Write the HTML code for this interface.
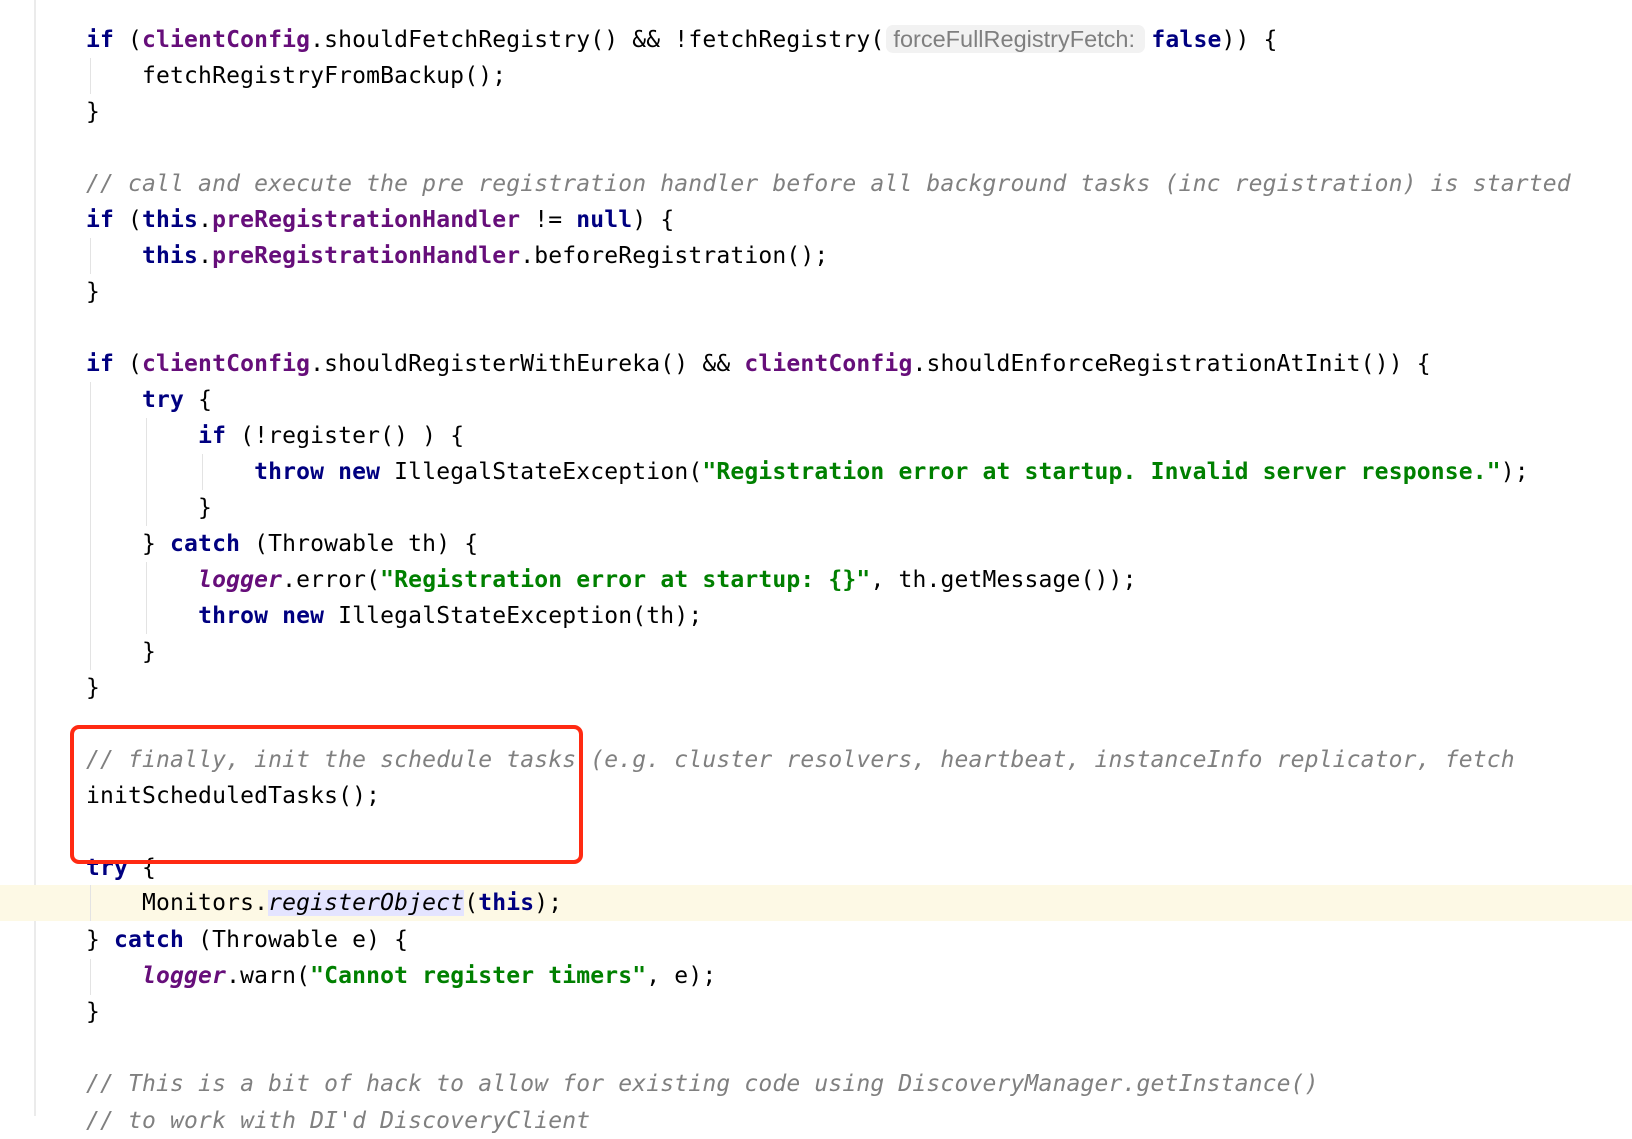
<!DOCTYPE html>
<html><head><meta charset="utf-8">
<style>
html,body{margin:0;padding:0;background:#fff;}
body{width:1632px;height:1116px;overflow:hidden;position:relative;font-family:"DejaVu Sans Mono","Liberation Mono",monospace;font-size:23px;letter-spacing:0.16px;color:#000;}
.gut{position:absolute;left:34px;top:0;width:2px;height:1116px;background:#ebebeb;}
.hl{position:absolute;left:0;top:885px;width:1632px;height:36px;background:#fdf9e5;}
.ln{position:absolute;left:86px;height:36px;line-height:36px;white-space:pre;}
.k{color:#000080;font-weight:bold;}
.f{color:#660e7a;font-weight:bold;}
.s{color:#008000;font-weight:bold;}
.c{color:#808080;font-style:italic;}
.l{color:#660e7a;font-weight:bold;font-style:italic;}
.it{font-style:italic;}
.sel{background:#e4e4ff;}
.hint{display:inline-block;font-family:"Liberation Sans","DejaVu Sans",sans-serif;font-size:23.5px;letter-spacing:0;color:#7f7f7f;background:#f2f2f2;border-radius:7px;height:28px;line-height:28px;padding:0 0 0 7px;width:259px;margin:0 6px 0 2px;vertical-align:middle;position:relative;top:-2px;box-sizing:border-box;overflow:hidden;}
.g{position:absolute;width:1px;background:#e3e3e3;}
.box{position:absolute;left:70px;top:725px;width:513px;height:139px;border:4px solid #ff2a12;border-radius:9px;box-sizing:border-box;}
</style></head><body>
<div class="gut"></div>
<div class="hl"></div>
<div class="g" style="left:90px;top:58px;height:36px"></div>
<div class="g" style="left:90px;top:238px;height:36px"></div>
<div class="g" style="left:90px;top:382px;height:288px"></div>
<div class="g" style="left:146px;top:418px;height:108px"></div>
<div class="g" style="left:202px;top:454px;height:36px"></div>
<div class="g" style="left:146px;top:562px;height:72px"></div>
<div class="g" style="left:90px;top:885px;height:36px"></div>
<div class="g" style="left:90px;top:959px;height:36px"></div>

<div class="ln" style="top:22px"><span class="k">if</span> (<span class="f">clientConfig</span>.shouldFetchRegistry() &amp;&amp; !fetchRegistry(<span class="hint">forceFullRegistryFetch:</span><span class="k">false</span>)) {</div>
<div class="ln" style="top:58px">    fetchRegistryFromBackup();</div>
<div class="ln" style="top:94px">}</div>
<div class="ln c" style="top:166px">// call and execute the pre registration handler before all background tasks (inc registration) is started</div>
<div class="ln" style="top:202px"><span class="k">if</span> (<span class="k">this</span>.<span class="f">preRegistrationHandler</span> != <span class="k">null</span>) {</div>
<div class="ln" style="top:238px">    <span class="k">this</span>.<span class="f">preRegistrationHandler</span>.beforeRegistration();</div>
<div class="ln" style="top:274px">}</div>
<div class="ln" style="top:346px"><span class="k">if</span> (<span class="f">clientConfig</span>.shouldRegisterWithEureka() &amp;&amp; <span class="f">clientConfig</span>.shouldEnforceRegistrationAtInit()) {</div>
<div class="ln" style="top:382px">    <span class="k">try</span> {</div>
<div class="ln" style="top:418px">        <span class="k">if</span> (!register() ) {</div>
<div class="ln" style="top:454px">            <span class="k">throw new</span> IllegalStateException(<span class="s">"Registration error at startup. Invalid server response."</span>);</div>
<div class="ln" style="top:490px">        }</div>
<div class="ln" style="top:526px">    } <span class="k">catch</span> (Throwable th) {</div>
<div class="ln" style="top:562px">        <span class="l">logger</span>.error(<span class="s">"Registration error at startup: {}"</span>, th.getMessage());</div>
<div class="ln" style="top:598px">        <span class="k">throw new</span> IllegalStateException(th);</div>
<div class="ln" style="top:634px">    }</div>
<div class="ln" style="top:670px">}</div>
<div class="ln c" style="top:742px">// finally, init the schedule tasks (e.g. cluster resolvers, heartbeat, instanceInfo replicator, fetch</div>
<div class="ln" style="top:778px">initScheduledTasks();</div>
<div class="ln" style="top:850px"><span class="k">try</span> {</div>
<div class="ln" style="top:885px">    Monitors.<span class="it sel">registerObject</span>(<span class="k">this</span>);</div>
<div class="ln" style="top:922px">} <span class="k">catch</span> (Throwable e) {</div>
<div class="ln" style="top:958px">    <span class="l">logger</span>.warn(<span class="s">"Cannot register timers"</span>, e);</div>
<div class="ln" style="top:994px">}</div>
<div class="ln c" style="top:1066px">// This is a bit of hack to allow for existing code using DiscoveryManager.getInstance()</div>
<div class="ln c" style="top:1103px">// to work with DI'd DiscoveryClient</div>
<div class="box"></div>
</body></html>
